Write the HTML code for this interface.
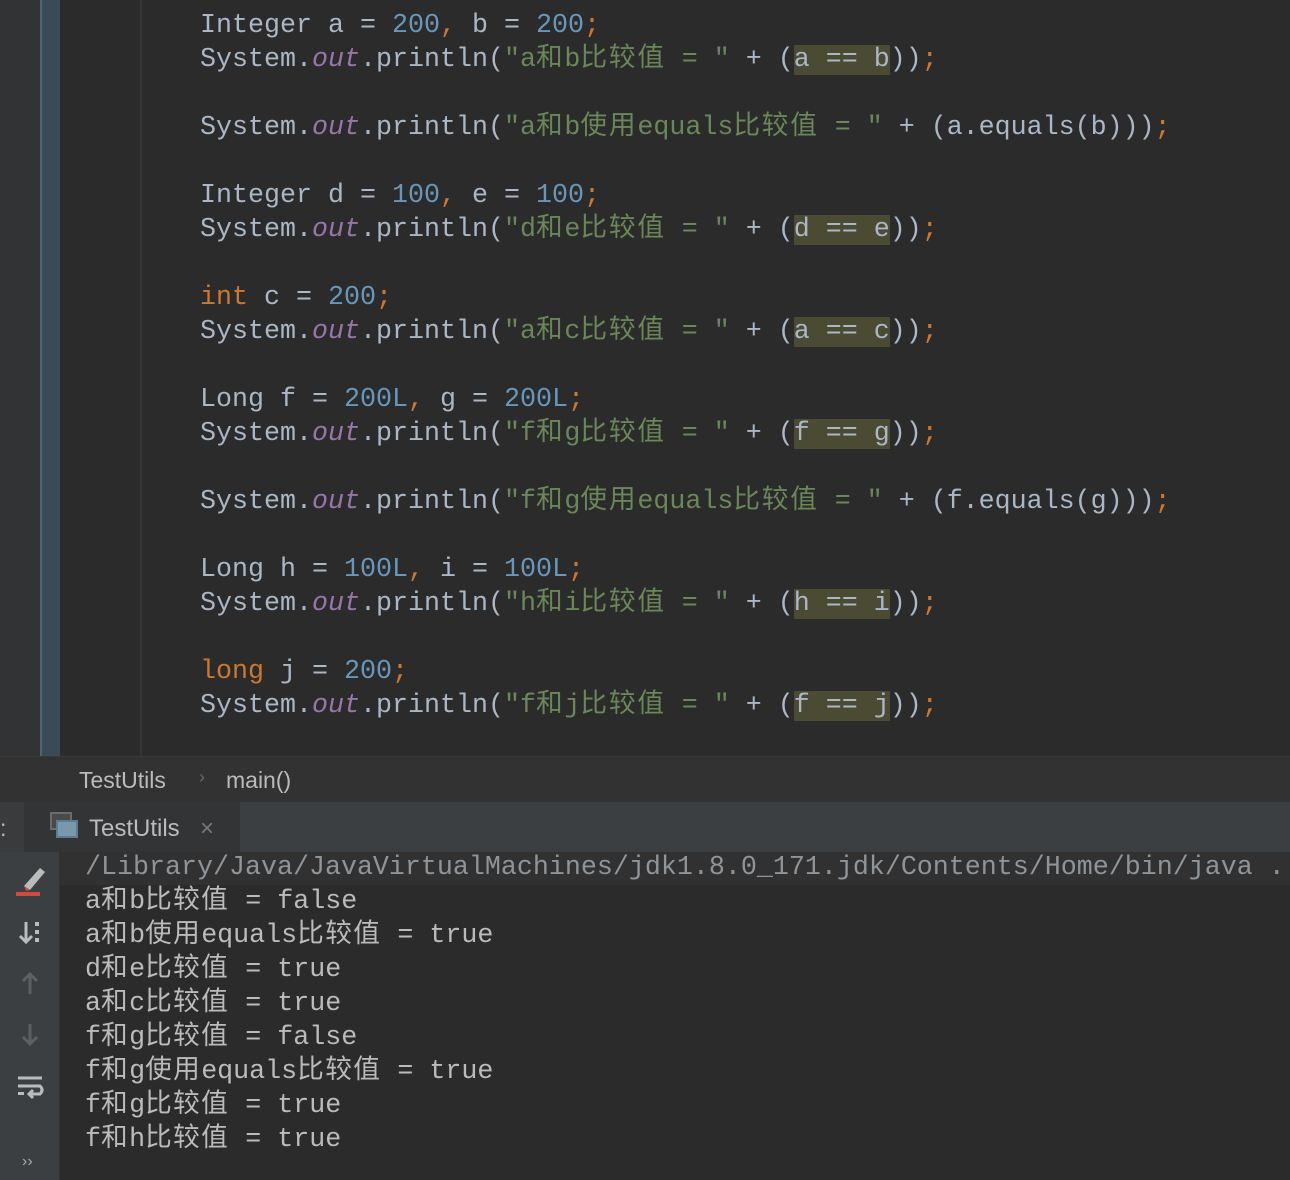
<!DOCTYPE html>
<html><head><meta charset="utf-8"><style>
*{margin:0;padding:0;box-sizing:border-box}
body{width:1290px;height:1180px;overflow:hidden;background:#2b2b2b;position:relative;font-family:"Liberation Mono","Noto Sans CJK SC",monospace;font-size:26.67px;color:#a9b7c6}
.l{position:absolute;left:200px;height:34px;line-height:34px;white-space:pre}
.n{color:#6897bb}.k{color:#cc7832}.s{color:#6a8759}.o{color:#9876aa;font-style:italic}
.h{background:#4b4a33}
.z{font-style:normal;letter-spacing:1.8px}
.c{position:absolute;left:85px;height:34px;line-height:34px;white-space:pre;color:#bbbbbb}
.c .z{letter-spacing:1.4px}
.ui{font-family:"Liberation Sans",sans-serif;font-size:23px;color:#bbbbbb;position:absolute}
</style></head><body>
<div style="position:absolute;left:0;top:0;width:40px;height:756px;background:#313335"></div>
<div style="position:absolute;left:40px;top:0;width:20px;height:756px;background:#3a4b55;border-left:2px solid #4f6670"></div>
<div style="position:absolute;left:140px;top:0;width:2px;height:756px;background:#363636"></div>

<div class="l" style="top:9px">Integer a = <span class="n">200</span><span class="k">,</span> b = <span class="n">200</span><span class="k">;</span></div>
<div class="l" style="top:43px">System.<span class="o">out</span>.println(<span class="s">"a<i class="z">和</i>b<i class="z">比较值</i> = "</span> + (<span class="h">a == b</span>))<span class="k">;</span></div>
<div class="l" style="top:111px">System.<span class="o">out</span>.println(<span class="s">"a<i class="z">和</i>b<i class="z">使用</i>equals<i class="z">比较值</i> = "</span> + (a.equals(b)))<span class="k">;</span></div>
<div class="l" style="top:179px">Integer d = <span class="n">100</span><span class="k">,</span> e = <span class="n">100</span><span class="k">;</span></div>
<div class="l" style="top:213px">System.<span class="o">out</span>.println(<span class="s">"d<i class="z">和</i>e<i class="z">比较值</i> = "</span> + (<span class="h">d == e</span>))<span class="k">;</span></div>
<div class="l" style="top:281px"><span class="k">int</span> c = <span class="n">200</span><span class="k">;</span></div>
<div class="l" style="top:315px">System.<span class="o">out</span>.println(<span class="s">"a<i class="z">和</i>c<i class="z">比较值</i> = "</span> + (<span class="h">a == c</span>))<span class="k">;</span></div>
<div class="l" style="top:383px">Long f = <span class="n">200L</span><span class="k">,</span> g = <span class="n">200L</span><span class="k">;</span></div>
<div class="l" style="top:417px">System.<span class="o">out</span>.println(<span class="s">"f<i class="z">和</i>g<i class="z">比较值</i> = "</span> + (<span class="h">f == g</span>))<span class="k">;</span></div>
<div class="l" style="top:485px">System.<span class="o">out</span>.println(<span class="s">"f<i class="z">和</i>g<i class="z">使用</i>equals<i class="z">比较值</i> = "</span> + (f.equals(g)))<span class="k">;</span></div>
<div class="l" style="top:553px">Long h = <span class="n">100L</span><span class="k">,</span> i = <span class="n">100L</span><span class="k">;</span></div>
<div class="l" style="top:587px">System.<span class="o">out</span>.println(<span class="s">"h<i class="z">和</i>i<i class="z">比较值</i> = "</span> + (<span class="h">h == i</span>))<span class="k">;</span></div>
<div class="l" style="top:655px"><span class="k">long</span> j = <span class="n">200</span><span class="k">;</span></div>
<div class="l" style="top:689px">System.<span class="o">out</span>.println(<span class="s">"f<i class="z">和</i>j<i class="z">比较值</i> = "</span> + (<span class="h">f == j</span>))<span class="k">;</span></div>

<div style="position:absolute;left:0;top:756px;width:1290px;height:46px;background:#323232;border-top:1px solid #393939"></div>
<div class="ui" style="left:79px;top:767px">TestUtils</div>
<div class="ui" style="left:199px;top:767px;color:#666;font-size:18px">›</div>
<div class="ui" style="left:226px;top:767px">main()</div>

<div style="position:absolute;left:0;top:802px;width:1290px;height:50px;background:#3c3f41"></div>
<div style="position:absolute;left:0;top:802px;width:24px;height:50px;background:#393b3d"></div>
<div style="position:absolute;left:24px;top:802px;width:216px;height:50px;background:#333435"></div>
<div class="ui" style="left:0;top:815px">:</div>
<div style="position:absolute;left:50px;top:812px;width:22px;height:18px;border:2px solid #6b6b6b;background:#4a4a4a"></div>
<div style="position:absolute;left:56px;top:820px;width:22px;height:18px;border:2px solid #5b7d93;background:#7a98ad"></div>
<div class="ui" style="left:89px;top:815px;font-size:24px">TestUtils</div>
<div class="ui" style="left:200px;top:815px;color:#777;font-size:24px">×</div>

<div style="position:absolute;left:0;top:852px;width:60px;height:328px;background:#3c3f41;border-right:1px solid #333"></div>
<div style="position:absolute;left:60px;top:852px;width:1230px;height:33px;background:#313131"></div>
<svg style="position:absolute;left:0;top:852px" width="60" height="328">
<path d="M24 34 L40 16 L45 20 L30 38 Z" fill="#bbb"/><path d="M24 34 L30 38 L26 39Z" fill="#d04b3c"/>
<rect x="16" y="40" width="24" height="4" fill="#d04b3c"/>
<path d="M26 70 V90 M20 84 L26 90 L32 84" stroke="#bbb" stroke-width="3" fill="none"/>
<rect x="35" y="70" width="4" height="4" fill="#bbb"/><rect x="35" y="78" width="4" height="4" fill="#bbb"/><rect x="35" y="86" width="4" height="4" fill="#bbb"/>
<path d="M30 122 V142 M23 129 L30 122 L37 129" stroke="#5d5f61" stroke-width="3" fill="none"/>
<path d="M30 172 V192 M23 185 L30 192 L37 185" stroke="#5d5f61" stroke-width="3" fill="none"/>
<path d="M18 226 H42 M18 234 H40 Q44 238 40 242 H30 M33 238 L29 242 L33 246" stroke="#bbb" stroke-width="3" fill="none"/>
<rect x="18" y="240" width="6" height="3" fill="#bbb"/>
<text x="22" y="314" fill="#aaa" font-family="Liberation Sans" font-size="16">››</text>
</svg>

<div class="c" style="top:851px;color:#8f9499">/Library/Java/JavaVirtualMachines/jdk1.8.0_171.jdk/Contents/Home/bin/java ..</div>
<div class="c" style="top:885px">a<i class="z">和</i>b<i class="z">比较值</i> = false</div>
<div class="c" style="top:919px">a<i class="z">和</i>b<i class="z">使用</i>equals<i class="z">比较值</i> = true</div>
<div class="c" style="top:953px">d<i class="z">和</i>e<i class="z">比较值</i> = true</div>
<div class="c" style="top:987px">a<i class="z">和</i>c<i class="z">比较值</i> = true</div>
<div class="c" style="top:1021px">f<i class="z">和</i>g<i class="z">比较值</i> = false</div>
<div class="c" style="top:1055px">f<i class="z">和</i>g<i class="z">使用</i>equals<i class="z">比较值</i> = true</div>
<div class="c" style="top:1089px">f<i class="z">和</i>g<i class="z">比较值</i> = true</div>
<div class="c" style="top:1123px">f<i class="z">和</i>h<i class="z">比较值</i> = true</div>
</body></html>
